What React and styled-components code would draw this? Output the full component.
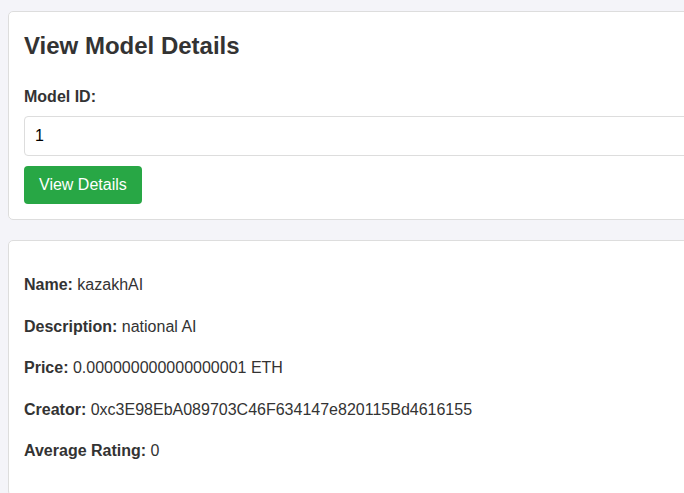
import React from "react";
import styled, { createGlobalStyle } from "styled-components";

const Global = createGlobalStyle`
  html, body { overflow: hidden; }
  body {
    margin: 0;
    padding: 11px 0 0 8px;
    background: #f4f4f9;
    color: #333;
    font-family: Arial, "Liberation Sans", sans-serif;
    line-height: 1.6;
  }
`;

const Container = styled.div`
  width: 800px;
  display: flex;
  flex-direction: column;
  gap: 20px;
`;

const Card = styled.section`
  background: #fff;
  border: 1px solid #ddd;
  border-radius: 5px;
  padding: 15px;
  display: ${(p) => (p.$stack ? "flex" : "block")};
  flex-direction: column;
`;

const Title = styled.h2`
  margin: 0 0 19px;
  font-size: 24px;
  font-weight: bold;
`;

const Label = styled.label`
  display: block;
  font-weight: bold;
  font-size: 16px;
  margin-bottom: 6px;
`;

const Input = styled.input`
  box-sizing: border-box;
  width: 100%;
  height: 40px;
  padding: 10px;
  border: 1px solid #ddd;
  border-radius: 4px;
  font-size: 16px;
  font-family: Arial, "Liberation Sans", sans-serif;
  color: #000;
  margin-bottom: 10px;
`;

const Button = styled.button`
  align-self: flex-start;
  background: #28a745;
  color: #fff;
  border: none;
  border-radius: 4px;
  padding: 10px 15px;
  font-size: 16px;
  line-height: 18px;
  font-family: Arial, "Liberation Sans", sans-serif;
  cursor: pointer;
`;

const Row = styled.p`
  margin: 16px 0;
  font-size: 16px;
`;

const details = [
  ["Name:", "kazakhAI"],
  ["Description:", "national AI"],
  ["Price:", "0.000000000000000001 ETH"],
  ["Creator:", "0xc3E98EbA089703C46F634147e820115Bd4616155"],
  ["Average Rating:", "0"],
];

export default function App() {
  return (
    <>
      <Global />
      <Container>
        <Card $stack>
          <Title>View Model Details</Title>
          <Label htmlFor="mid">Model ID:</Label>
          <Input id="mid" defaultValue="1" />
          <Button>View Details</Button>
        </Card>
        <Card>
          {details.map(([k, v]) => (
            <Row key={k}>
              <strong>{k}</strong> {v}
            </Row>
          ))}
        </Card>
      </Container>
    </>
  );
}
